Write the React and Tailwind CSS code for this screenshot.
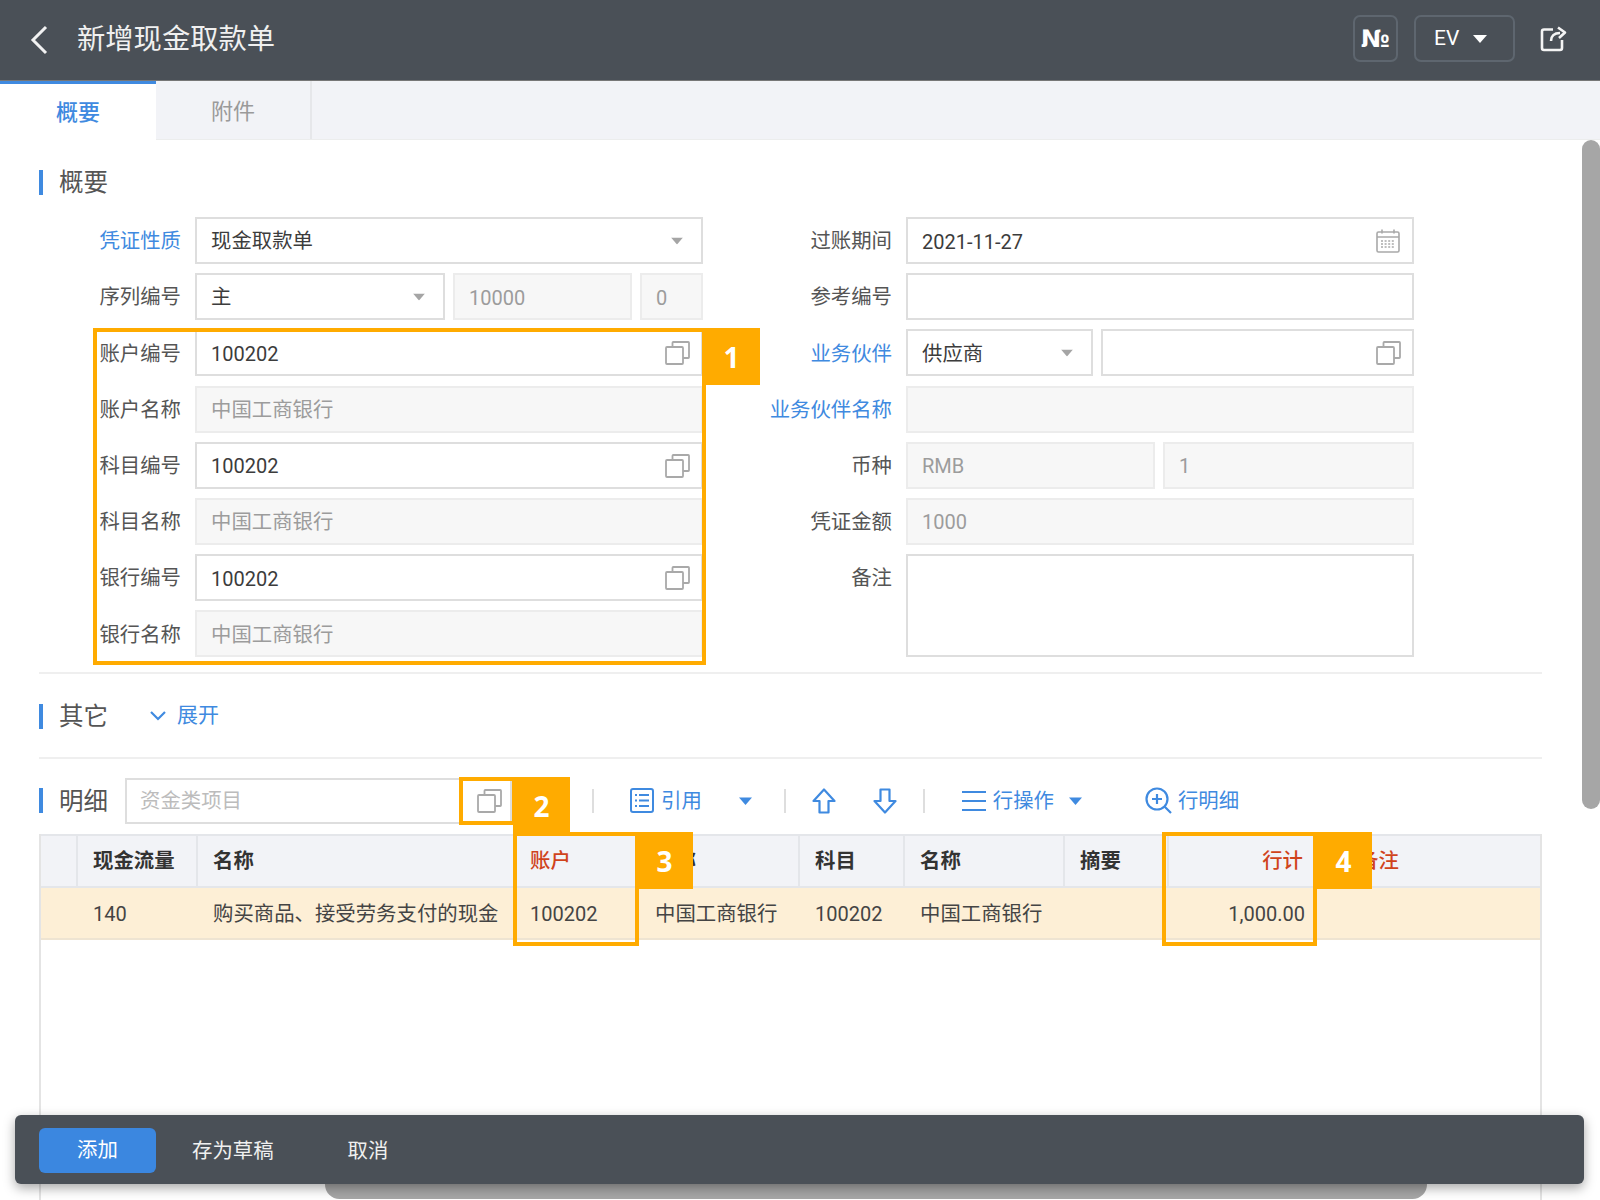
import React from 'react';

const cjk = (t) => (/[\u4e00-\u9fff]/.test(t || '') ? 'text-[20.4px]' : 'text-[20px]');

function CopyIcon({ className = '' }) {
  return (
    <svg className={className} width="25" height="24" viewBox="0 0 25 24" fill="none" stroke="#a9a9a9" strokeWidth="1.8">
      <path d="M7.5 6V1.8a.8.8 0 0 1 .8-.8h14.9a.8.8 0 0 1 .8.8v14.4a.8.8 0 0 1-.8.8H18" />
      <rect x="1" y="6" width="17" height="17" rx="1" />
    </svg>
  );
}

function Chevron() {
  return (
    <svg className="absolute right-[18px] top-1/2 -translate-y-1/2" width="12" height="7" viewBox="0 0 12 7" fill="#a5a5a5">
      <path d="M0 0h12L6 7z" />
    </svg>
  );
}

function Caret({ className = '' }) {
  return (
    <svg className={className} width="13" height="8" viewBox="0 0 13 8" fill="#3f8ae0">
      <path d="M0 .5h13L6.5 8z" />
    </svg>
  );
}

function Field({ value, disabled, select, copy, date, w }) {
  const bg = disabled ? 'bg-[#f7f7f7] border-[#ececec] text-[#9c9c9c]' : 'bg-white border-[#dedede] text-[#3c3c3c]';
  return (
    <div className={`relative h-[47px] border-2 flex items-center pl-[14px] pt-[2px] shrink-0 ${cjk(value)} ${bg} ${w}`}>
      {value}
      {select && <Chevron />}
      {copy && <CopyIcon className="absolute right-[11px] top-[10px]" />}
      {date && (
        <svg className="absolute right-[12px] top-[10px]" width="24" height="24" viewBox="0 0 24 24" fill="none" stroke="#a9a9a9" strokeWidth="1.6">
          <rect x="1" y="3" width="22" height="20" rx="1.5" />
          <path d="M1 8h22M6 0.5v4M18 0.5v4" />
          <path d="M5 12h14M5 15h14M5 18h14" strokeDasharray="2 1.6" />
        </svg>
      )}
    </div>
  );
}

function Row({ label, blue, labelW, children }) {
  return (
    <div className="flex items-center h-[47px]">
      <div className={`${labelW} shrink-0 text-right whitespace-nowrap mr-[14px] pt-[2px] text-[20.4px] ${blue ? 'text-[#3f8ae0]' : 'text-[#555]'}`}>{label}</div>
      <div className="flex gap-[8px]">{children}</div>
    </div>
  );
}

function SectionTitle({ children }) {
  return (
    <div className="flex items-center gap-[16px] h-[25px]">
      <div className="w-[4px] h-[25px] bg-[#3f8ae0]" />
      <span className="text-[24.5px] leading-none pt-[2px] text-[#555]">{children}</span>
    </div>
  );
}

function Badge({ n, className }) {
  return (
    <div className={`absolute w-[57px] h-[57px] bg-[#ffab00] text-white text-[28px] font-bold flex items-center justify-center font-['Open_Sans',sans-serif] ${className}`}>
      {n}
    </div>
  );
}

const gridCols = 'grid grid-cols-[37px_120px_317px_125px_160px_105px_160px_104px_149px_1fr]';

const headers = [
  { t: '' },
  { t: '现金流量' },
  { t: '名称' },
  { t: '账户', red: true },
  { t: '名称' },
  { t: '科目' },
  { t: '名称' },
  { t: '摘要' },
  { t: '行计', red: true, right: true },
  { t: '备注', red: true, pad: true },
];

const cells = ['', '140', '购买商品、接受劳务支付的现金', '100202', '中国工商银行', '100202', '中国工商银行', '', '1,000.00', ''];

export default function App() {
  return (
    <div className="relative w-[1600px] h-[1200px] overflow-hidden bg-white text-[20px] font-['Roboto','Noto_Sans_CJK_SC',sans-serif]">
      {/* Header */}
      <div className="h-[81px] bg-[#4a5057] border-b border-[#777] flex items-center">
        <svg className="ml-[30px]" width="18" height="30" viewBox="0 0 18 30" fill="none" stroke="#f2f2f2" strokeWidth="3">
          <path d="M16 2 3 15l13 13" />
        </svg>
        <div className="ml-[29px] text-[28.3px] text-[#f0f0f0]">新增现金取款单</div>
        <div className="ml-auto mb-[3px] flex items-center">
          <div className="w-[45px] h-[47px] border-2 border-[#5e666f] rounded-[7px] flex items-center justify-center text-white font-bold text-[24px] font-['DejaVu_Sans',sans-serif]">№</div>
          <div className="ml-[16px] w-[101px] h-[47px] border-2 border-[#5e666f] rounded-[7px] flex items-center pl-[18px] text-white text-[21px]">
            EV
            <svg className="ml-[14px]" width="14" height="8" viewBox="0 0 14 8" fill="#fff"><path d="M0 0h14L7 8z" /></svg>
          </div>
          <svg className="ml-[25px] mr-[33px] mb-[1px]" width="27" height="27" viewBox="0 0 27 27" fill="none" stroke="#f4f4f4" strokeWidth="2.6" strokeLinejoin="round">
            <path d="M13 4.5H4a2 2 0 0 0-2 2V23a2 2 0 0 0 2 2h16a2 2 0 0 0 2-2v-8" />
            <path d="M11 16c0-5 3-8 9-8" />
            <path d="M18 2.5 25 7.5 19 13" />
          </svg>
        </div>
      </div>

      {/* Tabs */}
      <div className="h-[59px] bg-[#f2f3f7] flex border-b border-[#eceded]">
        <div className="w-[156px] -mb-[1px] bg-white border-t-[3px] border-[#3f8ae0] flex items-center justify-center text-[#3f8ae0] text-[22px] font-medium">概要</div>
        <div className="w-[156px] border-r-2 border-[#e6e7ea] flex items-center justify-center pt-[2px] text-[#9a9a9a] text-[22px]">附件</div>
      </div>

      {/* Body */}
      <div className="pl-[39px] w-[1542px]">
        <div className="pt-[30px]">
          <SectionTitle>概要</SectionTitle>
        </div>

        <div className="flex mt-[22px]">
          <div className="flex flex-col gap-[9.2px]">
            <Row label="凭证性质" blue labelW="w-[142px]"><Field value="现金取款单" select w="w-[508px]" /></Row>
            <Row label="序列编号" labelW="w-[142px]">
              <Field value="主" select w="w-[250px]" />
              <Field value="10000" disabled w="w-[179px]" />
              <Field value="0" disabled w="w-[63px]" />
            </Row>
            <Row label="账户编号" labelW="w-[142px]"><Field value="100202" copy w="w-[508px]" /></Row>
            <Row label="账户名称" labelW="w-[142px]"><Field value="中国工商银行" disabled w="w-[508px]" /></Row>
            <Row label="科目编号" labelW="w-[142px]"><Field value="100202" copy w="w-[508px]" /></Row>
            <Row label="科目名称" labelW="w-[142px]"><Field value="中国工商银行" disabled w="w-[508px]" /></Row>
            <Row label="银行编号" labelW="w-[142px]"><Field value="100202" copy w="w-[508px]" /></Row>
            <Row label="银行名称" labelW="w-[142px]"><Field value="中国工商银行" disabled w="w-[508px]" /></Row>
          </div>
          <div className="flex flex-col gap-[9.2px]">
            <Row label="过账期间" labelW="w-[189px]"><Field value="2021-11-27" date w="w-[508px]" /></Row>
            <Row label="参考编号" labelW="w-[189px]"><Field w="w-[508px]" /></Row>
            <Row label="业务伙伴" blue labelW="w-[189px]">
              <Field value="供应商" select w="w-[187px]" />
              <Field copy w="w-[313px]" />
            </Row>
            <Row label="业务伙伴名称" blue labelW="w-[189px]"><Field disabled w="w-[508px]" /></Row>
            <Row label="币种" labelW="w-[189px]">
              <Field value="RMB" disabled w="w-[249px]" />
              <Field value="1" disabled w="w-[251px]" />
            </Row>
            <Row label="凭证金额" labelW="w-[189px]"><Field value="1000" disabled w="w-[508px]" /></Row>
            <div className="flex items-start">
              <div className="w-[189px] shrink-0 mr-[14px] h-[47px] pt-[2px] flex items-center justify-end text-[20.4px] text-[#555]">备注</div>
              <div className="w-[508px] h-[103px] border-2 border-[#dedede]" />
            </div>
          </div>
        </div>

        <div className="h-[2px] bg-[#efefef] mt-[15px]" />

        <div className="mt-[26px] flex items-center">
          <SectionTitle>其它</SectionTitle>
          <svg className="ml-[42px]" width="16" height="10" viewBox="0 0 16 10" fill="none" stroke="#3f8ae0" strokeWidth="2.2"><path d="m1 1 7 7 7-7" /></svg>
          <span className="ml-[11px] text-[21px] text-[#3f8ae0]">展开</span>
        </div>

        <div className="h-[2px] bg-[#efefef] mt-[25px]" />

        {/* Toolbar */}
        <div className="mt-[19px] flex items-center h-[46px] text-[#3f8ae0] text-[20.4px]">
          <SectionTitle>明细</SectionTitle>
          <div className="ml-[17px] relative h-[46px] w-[387px] border-2 border-[#dedede] flex items-center pl-[13px] text-[#bcbcbc] text-[20.4px]">
            资金类项目
            <CopyIcon className="absolute right-[8px] top-[9px]" />
          </div>
          <div className="ml-[80px] w-[2px] h-[24px] bg-[#dedede]" />
          <svg className="ml-[36px]" width="24" height="25" viewBox="0 0 24 25" fill="none" stroke="#3f8ae0" strokeWidth="2">
            <rect x="1" y="1" width="22" height="23" rx="2" />
            <path d="M5 7h2M9 7h10M5 12.5h2M9 12.5h10M5 18h2M9 18h10" />
          </svg>
          <span className="ml-[7px]">引用</span>
          <Caret className="ml-[37px]" />
          <div className="ml-[32px] w-[2px] h-[24px] bg-[#dedede]" />
          <svg className="ml-[26px]" width="24" height="26" viewBox="0 0 24 26" fill="none" stroke="#3f8ae0" strokeWidth="2.2" strokeLinejoin="round">
            <path d="M12 1.5 22.5 13H16.5V24.5H7.5V13H1.5z" />
          </svg>
          <svg className="ml-[37px]" width="24" height="26" viewBox="0 0 24 26" fill="none" stroke="#3f8ae0" strokeWidth="2.2" strokeLinejoin="round">
            <path d="M12 24.5 22.5 13H16.5V1.5H7.5V13H1.5z" />
          </svg>
          <div className="ml-[26px] w-[2px] h-[24px] bg-[#dedede]" />
          <svg className="ml-[37px]" width="24" height="22" viewBox="0 0 24 22" fill="none" stroke="#3f8ae0" strokeWidth="2.2">
            <path d="M0 2h24M0 11h24M0 20h24" />
          </svg>
          <span className="ml-[7px] whitespace-nowrap">行操作</span>
          <Caret className="ml-[15px]" />
          <svg className="ml-[63px]" width="27" height="27" viewBox="0 0 27 27" fill="none" stroke="#3f8ae0" strokeWidth="2.2">
            <circle cx="12" cy="12" r="10.5" />
            <path d="M12 7v10M7 12h10M19.5 19.5 26 26" />
          </svg>
          <span className="ml-[6px] whitespace-nowrap">行明细</span>
        </div>

        {/* Table */}
        <div className="mt-[10px] h-[380px] border-x-2 border-[#e4e4e4]">
          <div className={`${gridCols} h-[54px] bg-[#f2f3f7] border-y-2 border-[#e4e6ea] font-bold text-[20.4px] text-[#333]`}>
            {headers.map((h, i) => (
              <div
                key={i}
                className={`flex items-center pl-[15px] pr-[13px] pt-[1px] border-r-2 border-[#e4e6ea] last:border-r-0 ${h.red ? 'text-[#d0431c] font-medium' : ''} ${h.right ? 'justify-end' : ''} ${h.pad ? 'pl-[40px]' : ''}`}
              >
                {h.t}
              </div>
            ))}
          </div>
          <div className={`${gridCols} h-[52px] bg-[#fdefd6] border-b-2 border-[#eee4d2] text-[#444]`}>
            {cells.map((c, i) => (
              <div key={i} className={`flex items-center pl-[15px] pr-[13px] pt-[3px] whitespace-nowrap ${cjk(c)} ${i === 8 ? 'justify-end' : ''}`}>{c}</div>
            ))}
          </div>
        </div>
      </div>

      {/* Scrollbars */}
      <div className="absolute left-[1582px] top-[140px] w-[18px] h-[669px] bg-[#a6a6a6] rounded-full" />
      <div className="absolute left-[325px] top-[1170px] w-[1102px] h-[29px] bg-[#a6a6a6] rounded-full" />

      {/* Footer */}
      <div className="absolute left-[15px] top-[1115px] w-[1569px] h-[69px] bg-[#4a5057] rounded-[6px] flex items-center pl-[24px] shadow-[0_4px_12px_rgba(0,0,0,0.35)] text-[20.4px] text-[#f0f0f0]">
        <div className="w-[117px] h-[45px] mt-[1px] bg-[#3b87e0] rounded-[6px] flex items-center justify-center text-white">添加</div>
        <div className="ml-[36px] mt-[3px]">存为草稿</div>
        <div className="ml-[74px] mt-[3px]">取消</div>
      </div>

      {/* Annotation boxes */}
      <div className="absolute left-[93px] top-[328px] w-[613px] h-[337px] border-[4px] border-[#ffab00]" />
      <Badge n="1" className="left-[703px] top-[328px]" />
      <div className="absolute left-[459px] top-[777px] w-[57px] h-[48px] border-[4px] border-[#ffab00]" />
      <Badge n="2" className="left-[513px] top-[777px]" />
      <div className="absolute left-[513px] top-[832px] w-[126px] h-[114px] border-[4px] border-[#ffab00]" />
      <Badge n="3" className="left-[636px] top-[832px]" />
      <div className="absolute left-[1162px] top-[832px] w-[155px] h-[114px] border-[4px] border-[#ffab00]" />
      <Badge n="4" className="left-[1315px] top-[832px]" />
    </div>
  );
}
